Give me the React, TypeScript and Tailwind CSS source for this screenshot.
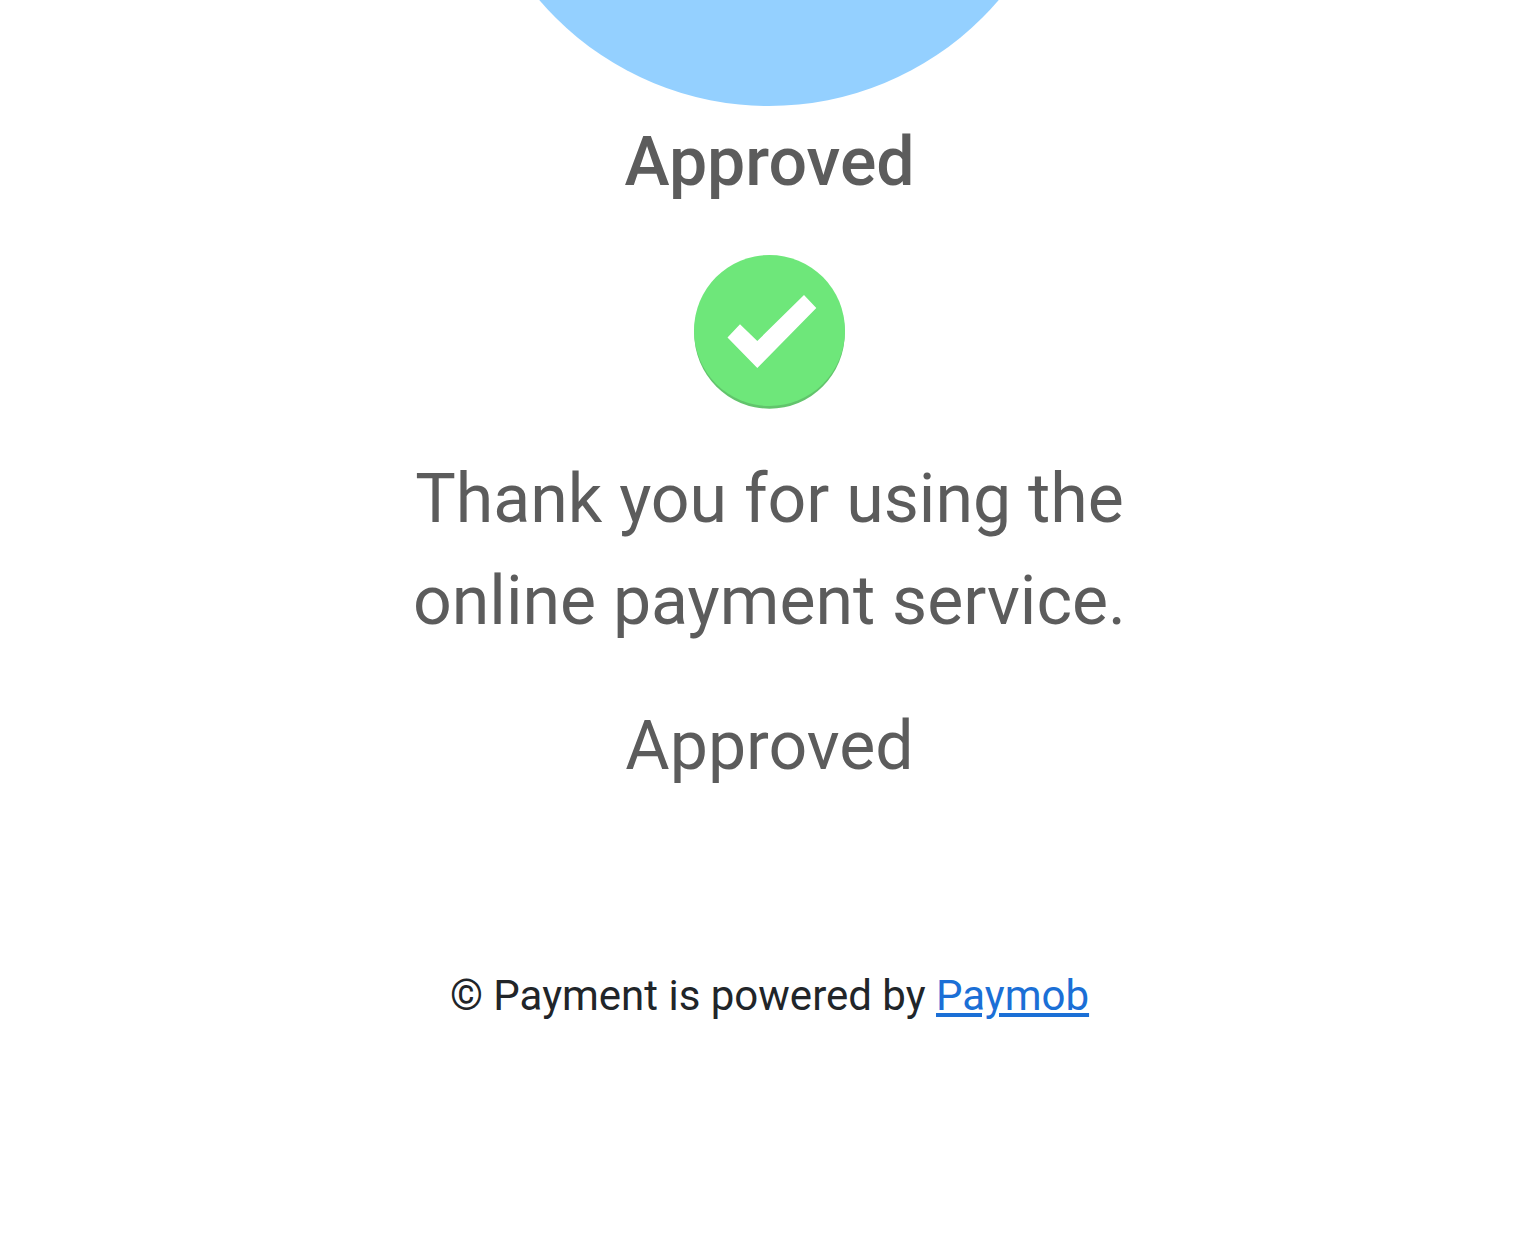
export default function App() {
  return (
    <main className="flex min-h-screen flex-col items-center overflow-hidden bg-white pl-1 font-[Roboto,sans-serif] text-[68px] leading-[102px] text-[#5c5c5c]">
      <svg className="block h-[106px] w-[600px]" viewBox="0 0 600 106" aria-hidden="true">
        <circle cx="299" cy="-196" r="302" fill="#94d0ff" />
      </svg>
      <h1 className="mt-[5px] text-center font-medium">Approved</h1>
      <svg className="mt-[39px] block h-[158px] w-[156px]" viewBox="0 0 156 158" role="img" aria-label="Success">
        <ellipse cx="77.5" cy="81" rx="75.3" ry="75.7" fill="#62c46c" />
        <ellipse cx="77.5" cy="78.5" rx="75.5" ry="75.5" fill="#6ee77a" />
        <path d="M35.5 85.5 L48 72.3 L65.3 89 L112 43 L124.3 56 L65.3 116 Z" fill="#fff" />
      </svg>
      <p className="mt-[38px] w-[740px] max-w-full text-center">Thank you for using the online payment service.</p>
      <p className="mt-[43px] text-center">Approved</p>
      <footer className="mt-[167px] text-center text-[42px] leading-[64px] text-[#212529]">
        © Payment is powered by{" "}
        <a href="#paymob" className="text-[#1b6fd6] underline">Paymob</a>
      </footer>
    </main>
  );
}
